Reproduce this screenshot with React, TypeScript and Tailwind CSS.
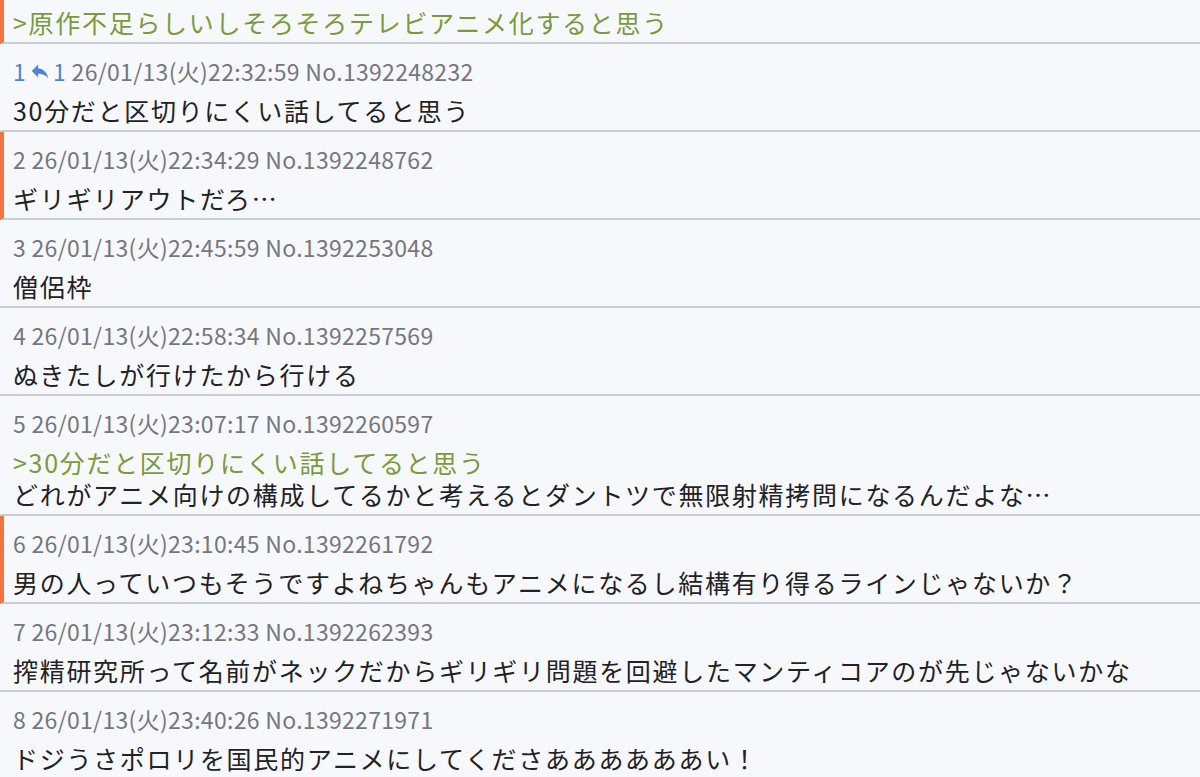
import React from "react";
import { MdReply } from "react-icons/md";

type Post = {
  n: number;
  date: string;
  no: string;
  quote?: string;
  body: string;
  mark?: boolean;
  replies?: number;
};

const posts: Post[] = [
  { n: 1, date: "26/01/13(火)22:32:59", no: "No.1392248232", body: "30分だと区切りにくい話してると思う", replies: 1 },
  { n: 2, date: "26/01/13(火)22:34:29", no: "No.1392248762", body: "ギリギリアウトだろ…", mark: true },
  { n: 3, date: "26/01/13(火)22:45:59", no: "No.1392253048", body: "僧侶枠" },
  { n: 4, date: "26/01/13(火)22:58:34", no: "No.1392257569", body: "ぬきたしが行けたから行ける" },
  {
    n: 5,
    date: "26/01/13(火)23:07:17",
    no: "No.1392260597",
    quote: ">30分だと区切りにくい話してると思う",
    body: "どれがアニメ向けの構成してるかと考えるとダントツで無限射精拷問になるんだよな…",
  },
  { n: 6, date: "26/01/13(火)23:10:45", no: "No.1392261792", body: "男の人っていつもそうですよねちゃんもアニメになるし結構有り得るラインじゃないか？", mark: true },
  { n: 7, date: "26/01/13(火)23:12:33", no: "No.1392262393", body: "搾精研究所って名前がネックだからギリギリ問題を回避したマンティコアのが先じゃないかな" },
  { n: 8, date: "26/01/13(火)23:40:26", no: "No.1392271971", body: "ドジうさポロリを国民的アニメにしてくださああああああい！" },
];

const font = { fontFamily: '"Noto Sans CJK JP", "Noto Sans", sans-serif' };

function Row({ p }: { p: Post }) {
  return (
    <div
      className={
        p.mark
          ? "border-b-2 border-[#c9ced3] border-l-4 border-l-[#f47340] pl-[9px] pr-3 pt-[9px] pb-[4px]"
          : "border-b-2 border-[#c9ced3] pl-[13px] pr-3 pt-[9px] pb-[4px]"
      }
    >
      <div className="flex h-[36px] items-center text-[23px] tracking-[0.3px] text-[#74777c] mb-[5px] whitespace-pre">
        {p.replies ? (
          <span className="flex items-center text-[#4a86d6]">
            <span>{p.n}</span>
            <MdReply className="ml-[3px] mr-[2px] h-[22px] w-[22px]" />
            <span>{p.replies}</span>
          </span>
        ) : (
          <span>{p.n}</span>
        )}
        <span>{" " + p.date + " " + p.no}</span>
      </div>
      {p.quote && (
        <div className="h-[32px] leading-[32px] text-[25px] tracking-[1.7px] text-[#7a9a3c] whitespace-nowrap">{p.quote}</div>
      )}
      <div className="h-[32px] leading-[32px] text-[25px] tracking-[1.7px] text-[#222] whitespace-nowrap">{p.body}</div>
    </div>
  );
}

export default function App() {
  return (
    <div className="w-[1200px] h-[777px] overflow-hidden bg-[#f7f8fc]" style={font}>
      <div className="border-b-2 border-[#c9ced3] border-l-4 border-l-[#f47340] pl-[9px] pt-[6px] pb-[4px]">
        <div className="h-[32px] leading-[32px] text-[25px] tracking-[1.7px] text-[#7a9a3c] whitespace-nowrap">
          {">原作不足らしいしそろそろテレビアニメ化すると思う"}
        </div>
      </div>
      {posts.map((p) => (
        <Row key={p.n} p={p} />
      ))}
    </div>
  );
}
